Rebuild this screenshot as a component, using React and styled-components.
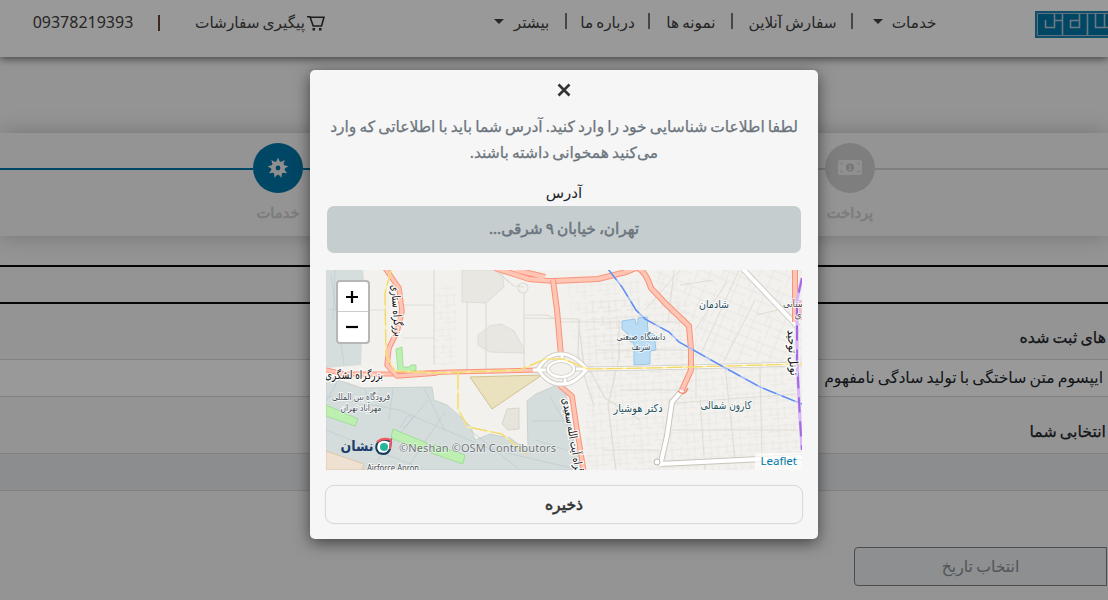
import React from 'react';
import styled, { createGlobalStyle } from 'styled-components';

const Global = createGlobalStyle`
  * { box-sizing: border-box; }
  body { margin: 0; width: 1108px; height: 600px; overflow: hidden; background: #f7f7f7;
    font-family: 'Noto Sans', 'DejaVu Sans', sans-serif; font-size: 15.7px; word-spacing: -.9px; color: #212529; }
`;
const Page = styled.div`position: relative; width: 1108px; height: 600px; overflow: hidden;`;
const Header = styled.header`
  display: flex; align-items: flex-start; height: 57px; padding: 8px 0 0 33px;
  background: #fff; box-shadow: 0 2px 8px rgba(0, 0, 0, .55); color: #404040;
`;
const Word = styled.span`
  flex: none; display: flex; justify-content: center; width: ${p => p.$w}px; margin-left: ${p => p.$gap || 0}px;
  font-size: ${p => p.$size || 15.3}px; line-height: 29px; white-space: nowrap; direction: rtl;
`;
const Separator = styled.i`
  flex: none; width: 2px; height: 16px; margin: ${p => p.$top || 5}px 0 0 ${p => p.$gap || 15}px;
  background: ${p => p.$color || '#757575'};
`;
const Caret = styled.i`
  flex: none; width: 0; height: 0; margin: 11px 0 0 ${p => p.$gap}px;
  border: 5px solid transparent; border-top-color: #404040; border-bottom: 0;
`;
const CartIcon = styled.svg`flex: none; width: 18px; height: 17px; margin: 7px 0 0 2px;`;
const Logo = styled.svg`flex: none; width: 73px; height: 27px; margin: 3px 0 0 98px;`;

const Stepper = styled.section`
  display: flex; height: 103px; margin-top: 76px; padding-top: 10px;
  background: #f7f7f7; box-shadow: 0 0 22px rgba(0, 0, 0, .22);
`;
const Rail = styled.div`width: ${p => p.$w}px; height: 2px; margin-top: 25px; background: ${p => p.$color};`;
const Step = styled.div`display: flex; flex-direction: column; align-items: center; width: 50px;`;
const Disc = styled.div`
  display: grid; place-items: center; width: 50px; height: 50px; border-radius: 50%; background: ${p => p.$color};
`;
const StepName = styled.div`
  margin-top: 6px; font-size: 14.7px; line-height: 26px; color: #cfcfcf; -webkit-text-stroke: .6px #cfcfcf;
  direction: rtl; white-space: nowrap;
`;

const TitleBar = styled.div`height: 39px; margin-top: 29px; border: solid #0a0a0a; border-width: 2px 0;`;
const Heading = styled.h2`
  margin: 0; padding-right: 2px; height: ${p => p.$h}px; line-height: ${p => p.$lh}px;
  font-size: 15.8px; font-weight: 500; color: #212529; -webkit-text-stroke: .25px #212529; direction: rtl; white-space: nowrap;
`;
const Row = styled.div`
  height: 38px; padding-right: 5px; line-height: 34px; direction: rtl; white-space: nowrap;
  background: ${p => p.$bg}; border: solid #d6d8dd; border-width: 1px 0;
`;
const DateField = styled.div`
  width: 253px; height: 39px; margin: 56px 0 0 854px; border: 1px solid #7c8084; border-radius: 4px 0 0 4px;
  background: #eceef0; color: #868e96; line-height: 36px; text-align: center; direction: rtl;
`;

const Overlay = styled.div`position: absolute; inset: 0; padding: 70px 0 0 310px; background: rgba(0, 0, 0, .4);`;
const Dialog = styled.div`
  display: flex; flex-direction: column; width: 508px; height: 469px; padding: 0 15px 15px;
  background: #f6f6f6; border-radius: 5px; box-shadow: 0 4px 16px rgba(0, 0, 0, .55);
`;
const CloseIcon = styled.svg`width: 14px; height: 14px; margin: 13px auto 0;`;
const Message = styled.p`
  margin: 16px 0 0; height: 52px; color: #6c757d; font-size: 15.5px; line-height: 26px;
  -webkit-text-stroke: .25px #6c757d; text-align: center; direction: rtl; white-space: nowrap;
`;
const Label = styled.label`
  margin-top: 14px; height: 27px; font-size: 15px; line-height: 26px; text-align: center; direction: rtl;
`;
const AddressField = styled.div`
  height: 47px; margin: 0 2px; border-radius: 7px; background: #c6cdcf; color: #6c757d;
  font-size: 15.3px; -webkit-text-stroke: .5px #6c757d; line-height: 44px; text-align: center; direction: rtl;
`;
const MapFrame = styled.div`
  position: relative; width: 476px; height: 200px; margin: 17px 0 0 1px; overflow: hidden; word-spacing: 0;
`;
const ZoomControl = styled.div`
  position: absolute; left: 10px; top: 10px; width: 34px; height: 64px;
  border: 2px solid #b7b7b5; border-radius: 4px; background: #fff;
`;
const ZoomButton = styled.div`
  display: flex; align-items: center; height: ${p => p.$h}px; padding-left: 8px;
  & + & { border-top: 1px solid #ccc; }
`;
const Attribution = styled.div`
  position: absolute; right: 0; bottom: 0; padding: 0 5px; height: 17px; background: rgba(255, 255, 255, .7);
  color: #0078a8; font-size: 11.5px; line-height: 15px;
`;
const SaveButton = styled.div`
  height: 39px; margin-top: 15px; border: 1px solid #d9d9d9; border-radius: 9px; box-shadow: 0 0 1px #d0d0d0;
  color: #333; font-size: 15.6px; -webkit-text-stroke: .6px #333; line-height: 36px; text-align: center; direction: rtl;
`;

const Road = ({ d, w = 4, c = '#ffc5b5', edge = '#f9937a' }) => (
  <g fill="none" strokeLinejoin="round"><path d={d} stroke={edge} strokeWidth={w + 2} /><path d={d} stroke={c} strokeWidth={w} /></g>
);
const Place = ({ x, y, w, size = 11, fill = '#1d5160', halo = 2, children, ...rest }) => (
  <text x={x} y={y} textLength={w} lengthAdjust="spacingAndGlyphs" fontSize={size} fill={fill} textAnchor="middle"
    stroke="#fff" strokeOpacity=".75" strokeWidth={halo} paintOrder="stroke" {...rest}>{children}</text>
);

const RAILWAY = 'M391 270L385 293L386 355L395 371L440 373L520 370L545 359L563 359L588 369L650 368L802 364M458 373V409L468 427L502 434L526 454';
const METRO = 'M608 269L622 287L636 310L645 319L669 332L679 342L720 365L760 387L802 404';
const TUNNEL = 'M802 278L797 300V360L800 420L802 450';

function CityMap() {
  return (
    <svg width="476" height="200" viewBox="326 270 476 200" fontFamily="'DejaVu Sans'">
      <defs>
        <pattern id="lanes" width="23" height="17" patternUnits="userSpaceOnUse" patternTransform="rotate(-4)">
          <path d="M0 3H23M0 9H14M5 13H23M4 0V9M11 3V17M18 0V13" stroke="#e5e4df" strokeWidth=".7" fill="none" />
        </pattern>
        <pattern id="blocks" width="29" height="27" patternUnits="userSpaceOnUse" patternTransform="rotate(22)">
          <path d="M0 6H29M0 15H29M0 22H19M7 0V27M19 0V15M24 6V27" stroke="#e4e3de" strokeWidth=".7" fill="none" />
        </pattern>
      </defs>
      <path d="M326 270H802V470H326Z" fill="#f2f1ee" />
      <path d="M590 300H690V470H585ZM693 365H802V470H665Z" fill="url(#lanes)" />
      <path d="M655 270H802V362H695V325L655 290Z" fill="url(#blocks)" />
      <path d="M434 285H456V365H434ZM567 280H640V360H575Z" fill="url(#lanes)" opacity=".8" />
      <path d="M326 270H363L366 300L362 342L361 365L326 368Z" fill="#d6dddd" />
      <path d="M326 376L362 388L432 387L434 400L447 405L462 418L471 427L475 440L490 434L510 438L528 451L527 401L536 394L557 385L566 394L572 435L583 470H326Z" fill="#d4dcdc" stroke="#c3cccb" strokeWidth=".8" />
      <path d="M326 451L364 464L362 470H326Z" fill="#eee1d1" stroke="#dfc5a9" />
      <path d="M462 270H502L504 287L486 303L462 302ZM490 326L501 324L514 331L524 349V353L490 352L478 345L478 335Z" fill="#e8e7e1" stroke="#dddcd6" />
      <path d="M470 377L542 375L492 409Z" fill="#eae1bf" stroke="#d2c28e" />
      <path d="M507 409L519 408V429L508 430L502 424Z" fill="#e7e4dc" stroke="#d8d5ce" />
      <g fill="none" stroke="#deddd5" strokeWidth="1.2">
        <path d="M365 310H385M402 305H433M434 270V364M467 302V369M486 303V370M403 338H434M495 270L514 286L524 287M524 293V369M524 315H547L562 322H680M525 318L578 319L584 365M579 320L578 356L594 406M619 320V358L608 405L616 470M590 370L605 398L640 420" />
        <path d="M645 310L680 270M668 323L674 270M680 285L713 280M695 330L727 282M724 361L755 300M700 356L739 270M696 365V399M725 365L735 460M760 365L762 463M675 403L797 394M665 430H797M700 400L705 470M620 390H688M602 450H658M757 315L790 307M595 350H690" strokeWidth="1" />
        <circle cx="523" cy="288" r="5" />
      </g>
      <g fill="none" stroke="#becbd0" strokeWidth=".7">
        <path d="M326 396L399 410L490 449L580 470M340 377L327 400M365 388L372 414M393 388L389 420M424 388L445 431M428 400L378 460M445 412L406 470M470 430L520 470M326 430L415 466M550 397L570 430M532 421H571M536 440L573 452M400 428L407 416H414L407 426M403 429L414 416" />
        <path d="M331 275L344 364M327 310L364 305M335 270L333 320" />
      </g>
      <path d="M326 405L358 419L355 426L326 416ZM393 429L427 443L424 451L391 438ZM434 445L465 455L463 464L431 453ZM396 349L402 347L403 367H409L411 365H416V371L398 372Z" fill="#bdf0b0" stroke="#98d990" strokeWidth=".8" />
      <path d="M622 321L635 319L636 324H638V318L647 317L648 332L654 334L656 350L650 351V364L634 365V343L629 341V335L622 329Z" fill="#badcf4" stroke="#99c7e6" />

      <Road d="M743 269L798 327" c="#fff" edge="#d0cec7" />
      <Road d="M686 386L672 402L667 436L660 466M660 464L802 457" c="#fff" edge="#cac6bd" />
      <circle cx="657" cy="462" r="3" fill="#fff" stroke="#bbb6ad" />
      <Road d="M588 369L650 368L802 364" w={3} c="#fff" edge="#d4d2cc" />
      <Road d="M326 370L345 374H399L450 372L541 370" w={3} />
      <Road d="M385 268L399 288L402 311L397 332L389 348L387 365L397 376L437 373" w={3.5} />
      <Road d="M495 268L529 279L554 281L598 279L626 272L636 268M516 270L545 277" />
      <Road d="M638 268Q646 272 651 288L666 304L689 326L691 350V370L682 390" />
      <path d="M678 391Q685 397 688 388" fill="none" stroke="#f98f72" strokeWidth="1.500" />
      <Road d="M553 280L557 310L561 356" />
      <Road d="M559 385L572 396L577 430L584 472" w={3.5} />
      <Road d="M538 369Q548 353 562 354Q573 354 587 369Q574 385 562 384Q548 385 538 369ZM562 354V362M565 376V385M533 370H549M575 369H593" w={3} c="#fff" edge="#d2cfc6" />
      <ellipse cx="561" cy="369" rx="13" ry="8" fill="#f2f1ee" stroke="#cac6bd" strokeWidth="4" />
      <ellipse cx="561" cy="369" rx="13" ry="8" fill="none" stroke="#fff" strokeWidth="2.5" />
      <Road d="M795 270V322" w={4} />
      <path d="M799 300H802V320H799Z" fill="#eec3ca" />
      <path d={RAILWAY} fill="none" stroke="#fbeea6" strokeWidth="1.6" />
      <path d={RAILWAY} fill="none" stroke="#f3d766" strokeWidth="1.2" strokeDasharray="16 4" />
      <path d={METRO} fill="none" stroke="#9fbbfb" strokeWidth="1.5" />
      <path d={METRO} fill="none" stroke="#5f8bf0" strokeWidth="1.3" strokeDasharray="14 6" />
      <path d={TUNNEL} fill="none" stroke="#d7b7f8" strokeWidth="3" />
      <path d={TUNNEL} fill="none" stroke="#a468e2" strokeWidth="2" strokeDasharray="15 9" />

      <Place x="714" y="308" w="30">شادمان</Place>
      <Place x="726" y="409" w="51">کارون شمالی</Place>
      <Place x="638" y="412" w="49">دکتر هوشیار</Place>
      <Place x="641" y="340" w="49" size={9.5} fill="#41505a">دانشگاه صنعتی</Place>
      <Place x="641" y="350" w="19" size={9.5} fill="#41505a">شریف</Place>
      <Place x="361" y="400" w="58" size={9.5} fill="#48515a">فرودگاه بین المللی</Place>
      <Place x="361" y="411" w="41" size={9.5} fill="#48515a">مهرآباد تهران</Place>
      <Place x="354" y="379" w="58" size={11.5} fill="#111" halo={3}>بزرگراه لشگری</Place>
      <Place x="0" y="0" w="52" size={11.5} fill="#111" halo={3} transform="translate(393 311) rotate(86)">بزرگراه ستاری</Place>
      <Place x="0" y="0" w="88" size={11.5} fill="#111" halo={3} transform="translate(570 442) rotate(80)">بزرگراه آیت الله سعیدی</Place>
      <Place x="0" y="0" w="46" size={11.5} fill="#111" halo={3} transform="translate(789 353) rotate(86)">تونل توحید</Place>
      <Place x="794" y="307" w="22" size={10} fill="#555">ستانی</Place>
      <Place x="798" y="318" w="7" size={10} fill="#555">ی</Place>
      <Place x="393" y="471" w="52" size={8} fill="#454b4d" fontFamily="'Noto Sans'">Airforce Apron</Place>
      <Place x="357" y="451" w="33" size={14} fill="#1b3d6c" fontWeight="bold" halo={0}>نشان</Place>
      <path d="M389 441Q383 438 378 442Q374 448 379 453Q387 456 390 449L391 440Z" fill="#fff" stroke="#193e5d" strokeWidth="2" />
      <path d="M377 442Q383 437 391 440L390 449" fill="none" stroke="#ef5961" strokeWidth="2" />
      <circle cx="384" cy="447" r="4" fill="#25b59a" />
      <text x="399" y="452" textLength="157" fontSize="11" fontFamily="'Noto Sans'" fill="#6e7477" stroke="#fff" strokeOpacity=".55" strokeWidth="1.5" paintOrder="stroke">©Neshan ©OSM Contributors</text>
    </svg>
  );
}

export default function App() {
  return (
    <Page>
      <Global />
      <Header>
        <Word $w={100} $size={16}>09378219393</Word>
        <Separator $color="#644434" $top={7} $gap={25} />
        <Word $w={110} $gap={35}>پیگیری سفارشات</Word>
        <CartIcon viewBox="0 0 18 17" fill="none" stroke="#303030" strokeWidth="1.6">
          <path d="M0 1.8H3L6.2 11H14.5L17 2.2H3M14.5 11H5.5" />
          <path d="M5.5 13H8V15.5H5.5ZM12 13H14.5V15.5H12Z" fill="#303030" stroke="none" />
        </CartIcon>
        <Caret $gap={169} /><Word $w={37} $gap={9}>بیشتر</Word>
        <Separator /><Word $w={51} $gap={15}>درباره ما</Word>
        <Separator /><Word $w={52} $gap={15}>نمونه ها</Word>
        <Separator $gap={14} /><Word $w={89} $gap={15}>سفارش آنلاین</Word>
        <Separator $gap={14} /><Caret $gap={20} /><Word $w={46} $gap={8}>خدمات</Word>
        <Logo viewBox="0 0 73 27">
          <path d="M0 0H73V27H0Z" fill="#0077a8" />
          <path d="M1 1H73M1 26H73M1 1V26" stroke="#4c9fc4" strokeWidth=".7" />
          <path d="M73 2.5H2.5V24.5H73" fill="none" stroke="#a3bfcd" />
          <path d="M10.5 9V16.5H19.5V3M19.500 9.500H27M27.500 3V24M35.500 17V9.500H44.500M44.500 3V16.500H35M52.500 3V24M60.500 3V16.500H73M69.500 3V16" fill="none" stroke="#b5cad5" strokeWidth="1.600" />
        </Logo>
      </Header>
      <Stepper>
        <Rail $w={253} $color="#0077a8" />
        <Step>
          <Disc $color="#0077a8">
            <svg width="22" height="22" viewBox="-11 -11 22 22">
              {[0, 40, 80, 120, 160, 200, 240, 280, 320].map(a => <path key={a} d="M-2.800 -4L0 -10.500L2.800 -4Z" fill="#eee" transform={`rotate(${a})`} />)}
              <circle r="4.600" fill="none" stroke="#eee" strokeWidth="4.400" />
            </svg>
          </Disc>
          <StepName>خدمات</StepName>
        </Step>
        <Rail $w={261} $color="#0077a8" />
        <Rail $w={261} $color="#d2d2d2" />
        <Step>
          <Disc $color="#d2d2d2">
            <svg width="24" height="16" viewBox="0 0 24 16">
              <rect width="24" height="15" rx="2" fill="#f0f0f0" />
              <circle cx="12" cy="7.500" r="4" fill="#c6c6c6" /><path d="M11 5.500H12V9.500M10.500 9.500H13.500" stroke="#f4f4f4" fill="none" />
              <path d="M3 5V3H5M19 3H21V5M21 10V12H19M5 12H3V10" stroke="#d2d2d2" fill="none" />
            </svg>
          </Disc>
          <StepName>پرداخت</StepName>
        </Step>
        <Rail $w={233} $color="#d2d2d2" />
      </Stepper>
      <TitleBar />
      <Heading $h={55} $lh={67}>های ثبت شده</Heading>
      <Row $bg="#fff">ایپسوم متن ساختگی با تولید سادگی نامفهوم</Row>
      <Heading $h={56} $lh={69}>انتخابی شما</Heading>
      <Row $bg="#e9ecef" />
      <DateField>انتخاب تاریخ</DateField>
      <Overlay>
        <Dialog>
          <CloseIcon viewBox="0 0 14 14" stroke="#333" strokeWidth="2.6"><path d="M1.5 1.5L12.5 12.5M12.5 1.5L1.5 12.5" /></CloseIcon>
          <Message>لطفا اطلاعات شناسایی خود را وارد کنید. آدرس شما باید با اطلاعاتی که وارد<br />می‌کنید همخوانی داشته باشند.</Message>
          <Label>آدرس</Label>
          <AddressField>تهران، خیابان ۹ شرقی...</AddressField>
          <MapFrame>
            <CityMap />
            <ZoomControl>
              <ZoomButton $h={29}><svg width="12" height="12" stroke="#000" strokeWidth="2.2"><path d="M0 6H12M6 0V12" /></svg></ZoomButton>
              <ZoomButton $h={31}><svg width="12" height="12" stroke="#000" strokeWidth="2.2"><path d="M0 6H12" /></svg></ZoomButton>
            </ZoomControl>
            <Attribution>Leaflet</Attribution>
          </MapFrame>
          <SaveButton>ذخیره</SaveButton>
        </Dialog>
      </Overlay>
    </Page>
  );
}
